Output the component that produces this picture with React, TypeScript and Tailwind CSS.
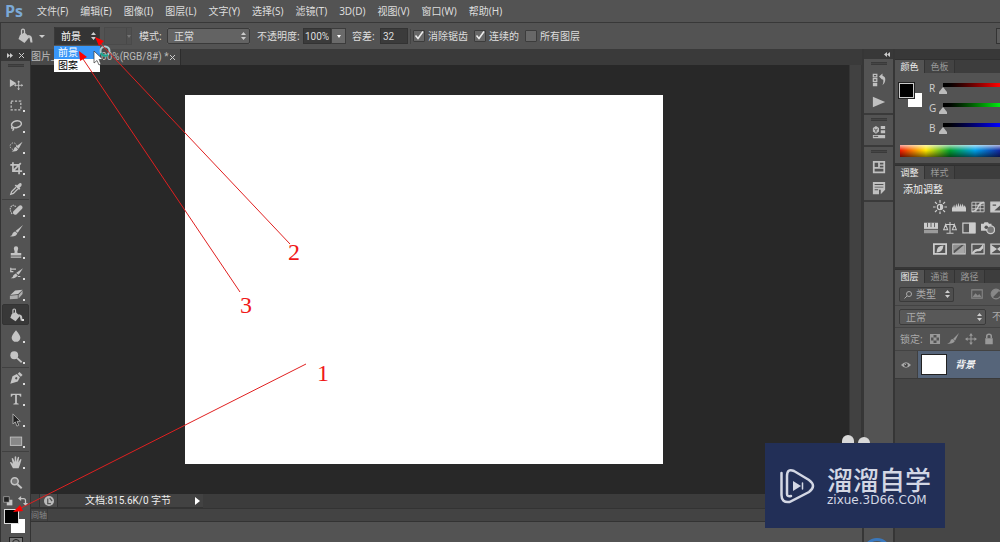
import { ReactNode } from "react";
import clsx from "clsx";

const menus = [
  "文件(F)", "编辑(E)", "图像(I)", "图层(L)", "文字(Y)", "选择(S)",
  "滤镜(T)", "3D(D)", "视图(V)", "窗口(W)", "帮助(H)",
];

function Icon({ children, className = "size-4" }: { children: ReactNode; className?: string }) {
  return (
    <svg viewBox="0 0 16 16" className={clsx("shrink-0", className)} fill="currentColor" aria-hidden="true">
      {children}
    </svg>
  );
}

const line = { fill: "none", stroke: "currentColor", strokeWidth: 1.4 };

const bucket = (
  <>
    <path d="M3 7 7.500 4.500l5 4.500-5 6L1.500 11z" />
    <path {...line} strokeWidth={1.300} d="M4.500 8V3q0-1.800 1.500-1.800T7.500 3v5" />
    <path d="M10.500 7q4 0 4.500 3l.5 4.500h-2L12.500 10z" />
  </>
);

type Tool = { name: string; icon: ReactNode; group?: boolean; plain?: boolean; active?: boolean };

const tools: Tool[] = [
  { name: "移动", plain: true, icon: <><path d="M1 2.500 8.500 7 1 11.500z" /><path {...line} strokeWidth={1} d="M11 5.500v8M7 9.500h8" /><path d="m11 4 1.700 2H9.300zM11 15l1.700-2H9.300zM5.800 9.500l2-1.700v3.400zM16.200 9.500l-2-1.700v3.400z" /></> },
  { name: "矩形选框", icon: <rect {...line} x="2.500" y="3.500" width="11" height="10" strokeDasharray="2.500 1.800" /> },
  { name: "套索", icon: <><ellipse {...line} strokeWidth={1.700} cx="8.500" cy="6" rx="5.700" ry="3.800" transform="rotate(-12 8.500 6)" /><path {...line} strokeWidth={1.300} d="M4 8.500q-2 1.500-.5 2.500t2-.8q.5 1.500-1.500 3.300" /></> },
  { name: "快速选择", icon: <><circle {...line} cx="5" cy="7" r="3.700" strokeDasharray="1.500 1.500" strokeWidth={1.100} /><path d="m15.500 2-4.500 8-3-2.500zM7.500 8l3 2.500Q9 14 3 13q3-1 3-3.500Q6.500 8 7.500 8z" /></> },
  { name: "裁剪", icon: <path {...line} strokeWidth={1.900} d="M4.500 1.500v10H15M1.500 4.500h10V15M5 11l8.500-8.500" /> },
  { name: "吸管", icon: <><path d="m9 4 3-2.500q2-.8 2.500 1.200T12 6.500l1 1-1.500 1.500-5-5L8 2.800z" /><path {...line} d="m8 6-5 5-1 3 3-1 5-5" /></> },
  { name: "修复画笔", group: true, icon: <><path d="M5 9.500 11.500 3q2-1 3.300.3t.2 3.200L8.500 13q-2 1-3.300-.3T5 9.500z" /><path {...line} strokeWidth={1.300} strokeDasharray="1.700 1" d="M3.500 12.500Q0 7 2.500 4T8 4.500" /></> },
  { name: "画笔", icon: <path d="M16 1 10 10 7.500 8zM7 8.500l2.500 2Q8 15 1 14q3-.8 3.200-3.500Q5.500 8.500 7 8.500z" /> },
  { name: "仿制图章", icon: <path d="M6.500 8 5.500 4q0-2.500 2.500-2.500T10.500 4l-1 4 .5 1h4v3H2V9h4zM2 13h12v1.500H2z" /> },
  { name: "历史记录画笔", icon: <><path d="M16 2.500 11 10 8 8zM7.500 8.500 10 10.500Q8 14.500 2 14q3-1 3-3.500z" /><path {...line} d="M2 3.500h6M2 2v4.500h3M10 12h3" /></> },
  { name: "橡皮擦", icon: <><path d="m7 4 8.500-1L10.500 8l-9 1z" /><path d="m1 10 9-1v4.500l-9 .5zM11 9l4.500-5v4L11 13z" opacity=".8" /></> },
  { name: "油漆桶", active: true, icon: bucket },
  { name: "模糊", icon: <path d="M8 1.500q5 6 5 8.500a5 4.700 0 0 1-10 0Q3 7.500 8 1.500z" /> },
  { name: "减淡", icon: <><circle cx="6" cy="6" r="4.500" /><path {...line} strokeWidth={2} d="m9 9 5.500 5" /></> },
  { name: "钢笔", group: true, icon: <><path fillRule="evenodd" d="M1.500 14.500 4 6l5-2.500 3.500 3.500L10 12zM8.200 7a1.300 1.300 0 1 0 .1 2.600A1.300 1.300 0 0 0 8.200 7z" /><path d="m10 3 2-2 3.500 3.500-2 2z" /></> },
  { name: "文字", icon: <path d="M2 2h12v3.500h-1Q12.500 3.300 11 3.300H9v9q0 .9 2 1v.9H5v-.9q2-.1 2-1v-9H5Q3.500 3.300 3 5.500H2z" /> },
  { name: "路径选择", icon: <path d="M4.500 1v11.500l2.700-2.300L9 15l2.200-1-2-4.500H13z" fill="#222" stroke="#aaa" strokeWidth="1.100" /> },
  { name: "矩形", icon: <rect x="1.500" y="3.500" width="13" height="9.500" fill="#888" stroke="currentColor" /> },
  { name: "抓手", group: true, icon: <path d="M4.500 15 1 8.500q1-1.200 2.500.7L4.500 10 3 4q1-1.200 1.800 0L6.500 8V2Q7.500.8 8.300 2v6L10 2.500q1.200-1 1.600.2L10.700 8.500l2.200-3.700q1.300-.6 1.300.7L12.500 11 11 15z" /> },
  { name: "缩放", plain: true, icon: <><circle cx="6.500" cy="6" r="4" fill="#777" stroke="currentColor" strokeWidth="1.800" /><path {...line} strokeWidth={2.300} d="m9.500 9.500 5 4.500" /></> },
];

const adjustments: ReactNode[][] = [
  [
    <><circle cx="8" cy="8" r="3" {...line} /><path d="M8 5a3 3 0 0 1 0 6z" /><path {...line} d="M8 0v3M8 13v3M0 8h3M13 8h3M2.300 2.300l2.200 2.200M11.500 11.500l2.200 2.200M13.700 2.300l-2.200 2.200M4.500 11.500l-2.200 2.200" /></>,
    <path d="M0 13V9l1-2v2l1.500-4 1 4L5 4l1 4 1.500-5 1 5L10 4l1 4 1-4 1.500 4 1-2L16 9v4z" />,
    <><path {...line} strokeWidth={1} d="M1 2.500h14v11H1zM1 6h14M1 10h14M5.500 2.500v11M10.500 2.500v11" /><path {...line} strokeWidth={1.800} d="M1 13q5 0 7-5t7-5" /></>,
    <><path {...line} d="M1 2.500h14v11H1z" /><path fillRule="evenodd" d="M15 2.500v11H1v-11zM3 5h4v1.500H3zM13 5 5 12h8z" /></>,
  ],
  [
    <><path d="M0 2h16v7H0z" /><path d="M0 10h16v4H0z" opacity=".6" /><path stroke="#535353" d="M4 2v5M8 2v5M12 2v5" /></>,
    <path {...line} strokeWidth={1.200} d="M8 1v13M4 14h8M2.500 4h11M3 4 .7 10h4.600zM13 4l-2.300 6h4.600z" />,
    <><path {...line} d="M1 2.500h14v11H1z" /><path d="M8 2h7v12H8z" /></>,
    <><path d="M0 3h3l1-1.500h4L9 3h3v8H0z" /><circle cx="11" cy="10" r="4.500" fill="#777" stroke="currentColor" strokeWidth="1.500" /><circle cx="6" cy="7" r="2" fill="#535353" /></>,
  ],
  [
    <><path {...line} strokeWidth={2} d="M1 2.500h14v11H1z" /><path d="M4 12q0-8 8-8-1 8-8 8z" /></>,
    <><path {...line} d="M1 2.500h14v11H1z" /><path d="M2 13 14 3v10z" opacity=".7" /><path d="M2 10V3h9z" opacity=".5" /></>,
    <><path {...line} d="M1 2.500h14v11H1z" /><path d="M1 12.500q3-5 6-4.500t7-6v5q-3 4-6 3.500t-5 3z" /></>,
    <><path {...line} d="M1 2.500h14v11H1z" /><path d="m1 3 7 5-7 5zM15 3 8 8l7 5z" /></>,
  ],
];

const channels = [
  { name: "R", bar: "bg-linear-to-r from-black to-[#ff0000] to-85%" },
  { name: "G", bar: "bg-linear-to-r from-black to-[#00e810] to-85%" },
  { name: "B", bar: "bg-linear-to-r from-black to-[#0000ff] to-85%" },
];

function Arrows() {
  return (
    <svg viewBox="0 0 5 8" className="pointer-events-none absolute right-1 top-1/2 h-2 w-[5px] -translate-y-1/2" fill="#ccc">
      <path d="m0 3 2.500-3L5 3zM0 5l2.500 3L5 5z" />
    </svg>
  );
}

function Select({ label, value, className }: { label: string; value: string; className: string }) {
  return (
    <div className={clsx("relative shrink-0", className)}>
      <select
        aria-label={label}
        className="block h-full w-full appearance-none rounded-[2px] border border-[#3a3a3a] bg-inherit px-1.5 leading-none text-inherit outline-none"
      >
        <option>{value}</option>
      </select>
      <Arrows />
    </div>
  );
}

function Check({ label, checked }: { label: string; checked?: boolean }) {
  return (
    <label className="flex shrink-0 items-center gap-[3px]">
      <span className="relative size-3">
        <input
          type="checkbox"
          defaultChecked={checked}
          className="peer block size-3 appearance-none rounded-[1px] border border-[#3c3c3c] bg-[#686868]"
        />
        <svg viewBox="0 0 12 12" className="pointer-events-none absolute inset-0 hidden size-3 peer-checked:block" fill="none" stroke="#eee" strokeWidth="1.500">
          <path d="m2.500 5.500 2.500 3L10 1.500" />
        </svg>
      </span>
      {label}
    </label>
  );
}

function PanelTabs({ tabs }: { tabs: string[] }) {
  return (
    <div className="flex h-3.5 shrink-0 border-t border-[#303030] bg-[#3d3d3d]" role="tablist">
      {tabs.map((tab, i) => (
        <button
          key={tab}
          role="tab"
          aria-selected={i === 0}
          className={clsx(
            "w-[30px] shrink-0 border-r border-[#333] text-[9px] leading-none",
            i === 0 ? "bg-[#535353] text-[#eee]" : "bg-[#434343] text-[#999]"
          )}
        >
          {tab}
        </button>
      ))}
    </div>
  );
}

function Grip() {
  return <div className="mx-auto h-[3px] w-4 border-y border-[#3a3a3a] bg-[#454545]" />;
}

function Toolbar() {
  return (
    <aside className="flex w-[31px] shrink-0 flex-col border-x border-[#333] bg-[#535353] text-[#c4c4c4]">
      <div className="flex h-3 shrink-0 items-center justify-between bg-[#383838] px-1.5">
        <svg viewBox="0 0 6 5" className="h-[5px] w-1.5" fill="#ccc"><path d="m0 0 3 2.500L0 5zM3 0l3 2.500L3 5z" /></svg>
        <svg viewBox="0 0 5 5" className="size-[5px]" stroke="#ccc"><path d="m0 0 5 5M5 0 0 5" /></svg>
      </div>
      <div className="h-3 shrink-0 pt-[3px]"><Grip /></div>
      {tools.map((tool) => (
        <button
          key={tool.name}
          aria-label={tool.name}
          className={clsx(
            "relative mx-px flex h-[21px] shrink-0 items-center justify-center",
            tool.group && "border-t border-[#404040]",
            tool.active && "rounded-[2px] border border-[#333] bg-[#383838]"
          )}
        >
          <Icon className="size-3.5">{tool.icon}</Icon>
          {!tool.plain && <span className="absolute bottom-[3px] right-1 size-0.5 bg-[#ddd]" />}
        </button>
      ))}
      <div className="flex h-4 shrink-0 items-center justify-between px-0.5">
        <Icon className="size-2.5"><path d="M6 6h9v9H6z" /><path d="M1 1h9v9H1z" fill="#222" stroke="#bbb" /></Icon>
        <Icon className="size-2.5"><path {...line} strokeWidth={2} d="M3 4h6q3 0 3 3v5" /><path d="M0 4l5-4v8zM12 16l-4-5h8z" /></Icon>
      </div>
      <div className="relative mx-[3px] h-6 shrink-0">
        <div className="absolute bottom-0 right-0.5 size-3.5 bg-white" />
        <div className="absolute left-0 top-0 size-[15px] border border-[#ddd] bg-black" />
      </div>
      <div className="mx-auto mt-1 flex h-3 w-3.5 shrink-0 items-center justify-center border border-[#222] bg-[#777]">
        <div className="size-2 rounded-full border border-[#222]" />
      </div>
    </aside>
  );
}

function Document() {
  return (
    <main className="flex min-w-0 flex-1 flex-col">
      <div className="flex h-4 shrink-0 bg-[#3a3a3a]">
        <div className="flex w-[150px] items-center justify-between border-r border-[#2c2c2c] bg-[#4a4a4a] pr-[5px] font-['Roboto','Noto_Sans_CJK_SC',sans-serif] leading-none text-[#bbb]">
          <span className="w-[63px] shrink-0 whitespace-nowrap">图片_</span>
          <span className="whitespace-nowrap">100%(RGB/8#) *</span>
          <button aria-label="关闭">
            <svg viewBox="0 0 5 5" className="size-[5px]" stroke="#ccc"><path d="m0 0 5 5M5 0 0 5" /></svg>
          </button>
        </div>
      </div>
      <div className="flex min-h-0 flex-1">
        <div className="flex flex-1 bg-[#282828] pb-[30px] pl-[154px] pr-[186px] pt-[30px]">
          <div className="flex-1 bg-white" />
        </div>
        <div className="w-[13px] border-x border-[#353535] bg-[#414141]" />
      </div>
      <div className="flex h-3.5 shrink-0 items-center bg-[#3c3c3c] text-[#eee]">
        <div className="flex h-full w-[172px] items-center border-b border-[#333] bg-[#424242]">
          <div className="ml-2 flex h-full w-[19px] items-center justify-center border-x border-[#333] bg-[#4b4b4b]">
            <Icon className="size-2.5"><circle cx="8" cy="8" r="8" fill="#bbb" /><path {...line} stroke="#555" strokeWidth={2} d="M6 4v8h5M9 3l4 5" /></Icon>
          </div>
          <span className="ml-[27px] whitespace-nowrap font-['Roboto','Noto_Sans_CJK_SC',sans-serif] leading-none">文档:815.6K/0 字节</span>
        </div>
        <div className="-ml-2 h-0 w-0 border-y-4 border-l-[5px] border-y-transparent border-l-white" />
      </div>
      <div className="flex h-3.5 shrink-0 border-y border-[#333] bg-[#434343] text-[8px] leading-3 text-[#888]">
        <span className="whitespace-nowrap border-r border-[#3a3a3a]">间轴</span>
      </div>
      <div className="h-5 shrink-0 bg-[#535353]" />
    </main>
  );
}

function Dock() {
  return (
    <div className="flex w-[33px] shrink-0 flex-col border-x-2 border-[#363636] bg-[#535353] text-[#c0c0c0]">
      <div className="flex h-2.5 items-center justify-end bg-[#383838] pr-[3px]">
        <svg viewBox="0 0 6 5" className="h-[5px] w-1.5" fill="#ccc"><path d="M3 0 0 2.500 3 5zM6 0 3 2.500 6 5z" /></svg>
      </div>
      <div className="flex h-14 flex-col items-center gap-2 border-b-2 border-[#3a3a3a] pt-[3px]">
        <Grip />
        <Icon className="size-3.5"><path {...line} d="M1.500 1.500h4v3h-4zM1.500 6.500h4v3h-4z" /><path d="M1 11h5v4H1zM8 4l4-3.500V3q4 1 3 6-.5 3-3 5 2-6 0-7.500V8z" /></Icon>
        <Icon className="size-3.5"><path d="m1 2 14 6-14 6z" /></Icon>
      </div>
      <div className="flex h-8 flex-col items-center gap-1 border-b-2 border-[#3a3a3a] pt-[3px]">
        <Grip />
        <Icon className="size-3.5"><path d="M1 3.500 4.500 1 8 3.500v4L4.500 10 1 7.500zM10 1h5v3.500h-5zM10 6h5v3.500h-5zM1 11.500h14V15H1z" /><path d="m2.500 4.500 2 1.500 2-1.500M4.500 6v2.500M2 13h5" {...line} stroke="#444" strokeWidth={1} /></Icon>
      </div>
      <div className="flex h-[55px] flex-col items-center gap-[7px] border-b-2 border-[#3a3a3a] pt-[3px]">
        <Grip />
        <Icon className="size-3.5"><path fillRule="evenodd" d="M1 1h14v14H1zM3 3v5h4V3zM9 3v2h4V3zM9 6.500v2h4v-2zM3 10v3h10v-3z" /></Icon>
        <Icon className="size-3.5"><path fillRule="evenodd" d="M1 1h14v9l-5 5v-5H8v5H1zM3 3.500v1h10v-1zM3 6.500v1h10v-1zM3 9.500v1h4v-1z" /></Icon>
      </div>
    </div>
  );
}

function Panels() {
  return (
    <aside className="flex w-[105px] shrink-0 flex-col overflow-hidden bg-[#464646] text-[#ccc]">
      <div className="h-2.5 shrink-0 bg-[#383838]" />
      <PanelTabs tabs={["颜色", "色板"]} />
      <section className="h-[92px] shrink-0 border-b-2 border-[#363636] bg-[#535353] pt-2.5">
        <div className="flex gap-[7px] pl-1">
          <div className="relative h-6 w-[23px] shrink-0">
            <div className="absolute bottom-0 right-0 size-3.5 bg-white" />
            <div className="absolute left-0 top-0 size-[15px] border border-[#ccc] bg-black outline outline-[#222]" />
          </div>
          <div>
            {channels.map((c) => (
              <label key={c.name} className="flex h-5 gap-0.5 leading-none">
                <span className="w-2 shrink-0">{c.name}</span>
                <span className="block w-[70px] shrink-0">
                  <span className={clsx("ml-1 block h-1", c.bar)} />
                  <input
                    type="range"
                    min={0}
                    max={255}
                    defaultValue={0}
                    className="block h-[7px] w-full appearance-none bg-transparent [&::-webkit-slider-thumb]:h-[7px] [&::-webkit-slider-thumb]:w-2 [&::-webkit-slider-thumb]:appearance-none [&::-webkit-slider-thumb]:bg-[#bbb] [&::-webkit-slider-thumb]:[clip-path:polygon(50%_0,100%_70%,100%_100%,0_100%,0_70%)]"
                  />
                </span>
              </label>
            ))}
          </div>
        </div>
        <div className="ml-[5px] mt-0.5 h-3 bg-[linear-gradient(to_bottom,#ffffffaa,transparent_45%,#00000088),linear-gradient(to_right,#f01800,#ffe800_26%,#00a030_50%,#00a0e8_75%,#1428a0)]" />
      </section>
      <PanelTabs tabs={["调整", "样式"]} />
      <section className="h-[90px] shrink-0 border-b-2 border-[#363636] bg-[#535353] pt-[3px]">
        <h2 className="pl-2 leading-[14px] text-[#eee]">添加调整</h2>
        {adjustments.map((row, i) => (
          <div key={i} className={clsx("flex h-[21px] items-center gap-[5px]", i === 1 ? "pl-[29px]" : "pl-[38px]")}>
            {row.map((icon, j) => (
              <button key={j} className="shrink-0"><Icon className="size-3.5">{icon}</Icon></button>
            ))}
          </div>
        ))}
      </section>
      <PanelTabs tabs={["图层", "通道", "路径"]} />
      <section className="shrink-0 bg-[#535353] text-[#aaa]">
        <div className="flex h-[23px] items-center border-b border-[#434343] pl-1">
          <div className="relative">
            <Select label="筛选" value="类型" className="h-[15px] w-[55px] bg-[#4e4e4e] [&>select]:pl-4" />
            <Icon className="absolute left-[5px] top-1 size-2"><circle {...line} strokeWidth={2} cx="10" cy="6" r="5" /><path {...line} strokeWidth={2} d="m6 10-5 5" /></Icon>
          </div>
          <Icon className="ml-[17px] size-3 text-[#888]"><path {...line} d="M1 2.500h14v11H1z" /><path d="m2 12 4-5 3 3 2-2 3 4z" /></Icon>
          <Icon className="ml-[7px] size-3 text-[#888]"><circle {...line} cx="8" cy="8" r="6.500" /><path d="M12.500 3.500a6 6 0 1 0-9 9z" /></Icon>
        </div>
        <div className="flex h-[22px] items-center gap-1.5 whitespace-nowrap border-b border-[#434343] pl-1">
          <Select label="混合模式" value="正常" className="h-4 w-[87px] bg-[#585858]" />
          不透明度
        </div>
        <div className="flex h-[23px] items-center border-b border-[#434343] pl-[5px]">
          <span className="w-[29px] shrink-0">锁定:</span>
          <div className="flex gap-1.5 text-[#999]">
            <Icon className="size-3"><path {...line} d="M2 2h12v12H2z" /><path d="M2 2h4v4H2zM10 2h4v4h-4zM6 6h4v4H6zM2 10h4v4H2zM10 10h4v4h-4z" /></Icon>
            <Icon className="size-3"><path d="m16 0-5 10-3-2zM7.500 8l3 2.500Q8 15 0 14q5-1 5-5z" /></Icon>
            <Icon className="size-3"><path {...line} d="M8 2v12M2 8h12" /><path d="m8 0 2.500 3.500h-5zM8 16l2.500-3.500h-5zM0 8l3.500-2.500v5zM16 8l-3.500-2.500v5z" /></Icon>
            <Icon className="size-3"><path d="M3 7h10v8H3z" /><path {...line} strokeWidth={2} d="M5 7V4q0-2.500 3-2.500T11 4v3" /></Icon>
          </div>
        </div>
        <div className="flex h-7 items-stretch border-b border-[#3a3a3a]">
          <button aria-label="可见性" className="flex w-[23px] items-center justify-center border-r border-[#404040]">
            <Icon className="size-2.5"><path d="M0 8q8-9 16 0-8 9-16 0z" /><circle cx="8" cy="8" r="3" fill="#444" /><circle cx="7" cy="7" r="1" /></Icon>
          </button>
          <div className="flex flex-1 items-center gap-2 whitespace-nowrap bg-[#56657a] pl-[3px] text-white">
            <div className="h-[21px] w-[26px] shrink-0 border border-[#222] bg-white" />
            <span className="font-medium italic">背景</span>
          </div>
        </div>
      </section>
    </aside>
  );
}

function Annotations() {
  return (
    <div className="pointer-events-none absolute left-0 top-0 z-20 font-['Liberation_Serif',serif] text-2xl leading-none text-[#f01818]">
      <svg width="330" height="530" viewBox="0 0 330 530" fill="#ff0000" stroke="#e02020">
        <path d="M290 244 101 44M240 292 83 59M306 364 21 508" strokeWidth="1" fill="none" />
        <path stroke="none" d="m95 37 9 4-5 5zM79 51l8 6-7 4zM13 512l7-7 3 6z" />
      </svg>
      <span className="absolute left-[288px] top-[240px]">2</span>
      <span className="absolute left-[240px] top-[293px]">3</span>
      <span className="absolute left-[317px] top-[361px]">1</span>
    </div>
  );
}

function Watermark() {
  return (
    <>
      <div className="absolute bottom-[93px] right-[146px] h-3.5 w-3 rounded-full bg-[#d8d8d8]" />
      <div className="absolute bottom-[91px] right-[130px] h-3.5 w-3 rounded-full bg-[#d8d8d8]" />
      <div className="absolute bottom-3.5 right-[55px] flex h-[85px] w-[180px] items-center gap-3 bg-[#222f57] pl-3.5 text-[#d3d7e4]">
        <svg viewBox="0 0 36 36" className="size-9 shrink-0" fill="none" stroke="currentColor" strokeWidth="2.500" strokeLinecap="round">
          <path d="M2.500 5v22q0 8 8 7L30 24q8-6 0-12L15 3Q8 0 8 8v18q0 3 4 2" />
          <path d="m14 13 8 5-8 5z" fill="currentColor" stroke="none" />
          <path d="M23.500 15v6" strokeWidth="1.500" />
        </svg>
        <div className="whitespace-nowrap">
          <div className="text-[26px] font-medium leading-7">溜溜自学</div>
          <div className="font-['DejaVu_Sans',sans-serif] text-xs leading-3">zixue.3D66.COM</div>
        </div>
      </div>
    </>
  );
}

export default function App() {
  return (
    <div className="relative isolate flex h-screen flex-col overflow-hidden bg-[#535353] font-['Noto_Sans','Noto_Sans_CJK_SC',sans-serif] text-[10px] text-[#ddd]">
      <nav className="flex h-[23px] shrink-0 items-center gap-3 whitespace-nowrap border-b border-[#383838] pl-[5px]">
        <span className="w-5 font-['Open_Sans',sans-serif] text-base font-bold leading-none text-[#7ba9d6]">Ps</span>
        {menus.map((m) => (
          <button key={m}>{m}</button>
        ))}
      </nav>

      <div className="flex h-[26px] shrink-0 items-center whitespace-nowrap border-l border-[#383838] pl-4">
        <Icon className="size-4 text-[#c4c4c4]">{bucket}</Icon>
        <div className="ml-1.5 border-x-[3px] border-t-[3px] border-x-transparent border-t-[#ccc]" />
        <div className="relative ml-[9px]">
          <Select label="填充" value="前景" className="h-[18px] w-[46px] bg-[#343434] text-white" />
          <ul className="absolute left-0 top-[19px] z-10 w-[46px] bg-white leading-[13px] text-black">
            <li className="bg-[#3896f8] pl-1 text-white">前景</li>
            <li className="pl-1">图案</li>
          </ul>
          <svg viewBox="0 0 24 24" className="absolute left-[37px] top-[17px] z-10 size-6">
            <circle cx="14" cy="7" r="4.500" fill="none" stroke="#a9c9cf" strokeWidth="2" />
            <path d="M10 9q2 4 7 2" fill="none" stroke="#1ba58c" strokeWidth="2" />
            <path d="M3 7v12l3-2.500L8 21l2-1-2-4.500h4z" fill="#fff" stroke="#333" strokeWidth=".7" />
          </svg>
        </div>
        <div className="ml-1 flex h-[18px] w-7 justify-end border border-[#4a4a4a] bg-[#505050]">
          <div className="flex w-[5px] items-center border-l border-[#484848]">
            <div className="border-x-2 border-t-[3px] border-x-transparent border-t-[#777]" />
          </div>
        </div>
        <span className="ml-[7px] w-7">模式:</span>
        <Select label="模式" value="正常" className="h-4 w-[83px] bg-[#636363]" />
        <label className="ml-[7px] flex items-center">
          <span className="w-[46px]">不透明度:</span>
          <input defaultValue="100%" className="h-4 w-7 border border-[#333] bg-[#3b3b3b] px-px font-['Roboto',sans-serif] leading-none outline-none" />
        </label>
        <button aria-label="不透明度滑块" className="flex h-4 w-[15px] items-center justify-center border border-[#3c3c3c] bg-[#6a6a6a]">
          <span className="border-x-2 border-t-[3px] border-x-transparent border-t-white" />
        </button>
        <label className="ml-1.5 flex items-center">
          <span className="w-7">容差:</span>
          <input defaultValue="32" className="h-4 w-7 border border-[#333] bg-[#3b3b3b] px-0.5 font-['Roboto',sans-serif] leading-none outline-none" />
        </label>
        <div className="ml-0.5 flex gap-1.5 border-l border-[#444] pl-0.5">
          <Check label="消除锯齿" checked />
          <Check label="连续的" checked />
          <Check label="所有图层" />
        </div>
        <div className="ml-auto h-4 w-1 border border-r-0 border-[#333] bg-[#5c5c5c]" />
      </div>

      <div className="flex min-h-0 flex-1">
        <Toolbar />
        <Document />
        <Dock />
        <Panels />
      </div>

      <div className="absolute -bottom-6 right-[109px] size-7 rounded-full border-[3px] border-[#3a78bd]" />
      <Watermark />
      <Annotations />
    </div>
  );
}
